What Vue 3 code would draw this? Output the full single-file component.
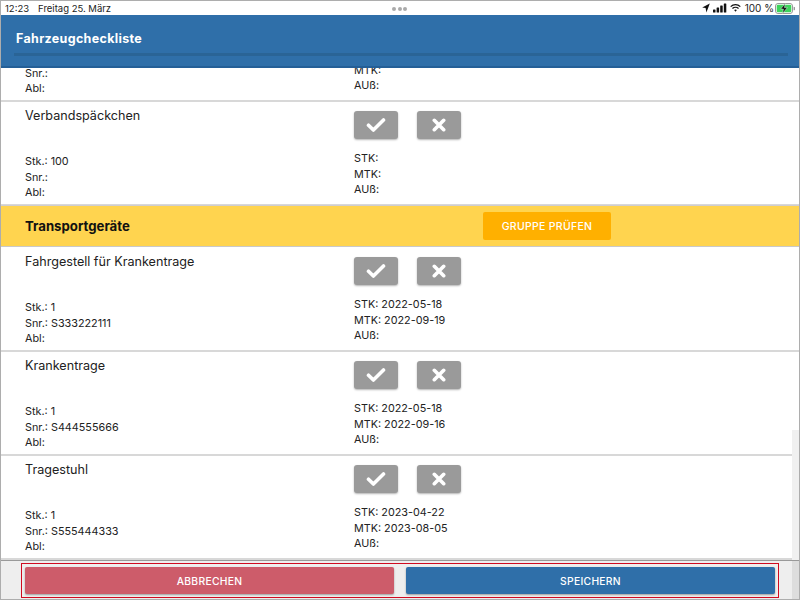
<script setup>
const blocks = [
  { type: 'row', cut: true, title: '', l: ['Stk.:', 'Snr.:', 'Abl:'], r: ['STK:', 'MTK:', 'AUß:'] },
  { type: 'row', title: 'Verbandspäckchen', l: ['Stk.: 100', 'Snr.:', 'Abl:'], r: ['STK:', 'MTK:', 'AUß:'] },
  { type: 'group', title: 'Transportgeräte' },
  { type: 'row', title: 'Fahrgestell für Krankentrage', l: ['Stk.: 1', 'Snr.: S333222111', 'Abl:'], r: ['STK: 2022-05-18', 'MTK: 2022-09-19', 'AUß:'] },
  { type: 'row', title: 'Krankentrage', l: ['Stk.: 1', 'Snr.: S444555666', 'Abl:'], r: ['STK: 2022-05-18', 'MTK: 2022-09-16', 'AUß:'] },
  { type: 'row', title: 'Tragestuhl', l: ['Stk.: 1', 'Snr.: S555444333', 'Abl:'], r: ['STK: 2023-04-22', 'MTK: 2023-08-05', 'AUß:'] },
]
</script>

<template>
  <div class="frame">
    <div class="status">
      <span class="time">12:23</span>
      <span class="date">Freitag 25. März</span>
      <span class="dots"><i></i><i></i><i></i></span>
      <span class="sys">
        <svg width="8" height="10" viewBox="0 0 8 10"><path d="M7.8 0.6 L0.2 4.4 L3.6 5 L4.4 9.4 Z" fill="#111" /></svg>
        <svg width="14" height="10" viewBox="0 0 14 10"><g fill="#111"><rect x="0" y="6.5" width="2.5" height="3" rx=".5" /><rect x="3.6" y="4.5" width="2.5" height="5" rx=".5" /><rect x="7.2" y="2.5" width="2.5" height="7" rx=".5" /><rect x="10.8" y="0.5" width="2.5" height="9" rx=".5" /></g></svg>
        <svg width="11" height="10" viewBox="0 0 13 10"><g fill="none" stroke="#111" stroke-width="1.5"><path d="M.8 3.4a8.2 8.2 0 0 1 11.4 0" /><path d="M2.9 5.6a5.2 5.2 0 0 1 7.2 0" /></g><path d="M4.9 7.4a2.3 2.3 0 0 1 3.2 0L6.5 9.4Z" fill="#111" /></svg>
        <span class="pct">100 %</span>
        <svg width="20" height="11" viewBox="0 0 20 11"><rect x=".5" y=".5" width="17" height="10" rx="2.5" fill="none" stroke="#999" /><rect x="1.7" y="1.7" width="14.6" height="7.6" rx="1.4" fill="#3dd45c" /><path d="M18.6 3.8a1.6 1.6 0 0 1 0 3.4Z" fill="#999" /><path d="M10.2 .6 L5.6 6.1 H8.4 L7.6 10.4 L12.4 4.6 H9.5 Z" fill="#111" stroke="#dff5e3" stroke-width=".5" /></svg>
      </span>
    </div>

    <header class="head">
      <div class="head-title">Fahrzeugcheckliste</div>
      <div class="head-line"></div>
    </header>

    <main class="list">
      <template v-for="(b, i) in blocks" :key="i">
        <section v-if="b.type === 'group'" class="group">
          <strong class="group-title">{{ b.title }}</strong>
          <button class="group-btn">GRUPPE PRÜFEN</button>
        </section>
        <section v-else class="row" :class="{ cut: b.cut }">
          <div class="col left">
            <div class="title">{{ b.title }}</div>
            <div class="lines">
              <div v-for="t in b.l" :key="t">{{ t }}</div>
            </div>
          </div>
          <div class="col right">
            <div class="actions">
              <button class="act">
                <svg width="20" height="16" viewBox="0 0 20 16"><path d="M2.5 8.2 L7.4 13 L17.5 3" fill="none" stroke="#fff" stroke-width="3.6" stroke-linecap="round" stroke-linejoin="round" /></svg>
              </button>
              <button class="act">
                <svg width="14" height="14" viewBox="0 0 14 14"><path d="M2.3 2.3 L11.7 11.7 M11.7 2.3 L2.3 11.7" fill="none" stroke="#fff" stroke-width="3.6" stroke-linecap="round" /></svg>
              </button>
            </div>
            <div class="lines">
              <div v-for="t in b.r" :key="t">{{ t }}</div>
            </div>
          </div>
        </section>
      </template>
      <div class="track"></div>
    </main>

    <footer class="foot">
      <div class="foot-box">
        <button class="foot-btn cancel">ABBRECHEN</button>
        <button class="foot-btn save">SPEICHERN</button>
      </div>
      <div class="foot-track"></div>
    </footer>
  </div>
</template>

<style>
html, body { margin: 0; padding: 0; }
</style>

<style scoped>
.frame {
  box-sizing: border-box;
  width: 800px;
  height: 600px;
  border: 1px solid #adadad;
  display: flex;
  flex-direction: column;
  overflow: hidden;
  background: #fff;
  font-family: Inter, "Liberation Sans", sans-serif;
  color: #222;
}
.status {
  height: 14px;
  flex: none;
  display: flex;
  align-items: center;
  padding: 0 4px 0 4px;
  font-size: 9.5px;
  color: #222;
  position: relative;
}
.time { margin-right: 9px; }
.dots {
  position: absolute;
  left: 391px;
  top: 6px;
  display: flex;
  gap: 1.5px;
}
.dots i {
  width: 4px;
  height: 4px;
  border-radius: 50%;
  background: #aaa;
}
.sys {
  margin-left: auto;
  display: flex;
  align-items: center;
  gap: 3px;
}
.pct { margin: 0 -2px 0 1px; font-size: 10px; }
.head {
  height: 53px;
  flex: none;
  box-sizing: border-box;
  background: #2f6fa9;
  border-bottom: 2px solid #245f97;
  padding: 16px 11px 0 13px;
  color: #fff;
}
.head-title {
  font-size: 12.5px;
  font-weight: 700;
  letter-spacing: .33px;
  padding-left: 2px;
  line-height: 16px;
}
.head-line {
  margin-top: 6px;
  height: 3px;
  background: #2a6496;
}
.list {
  flex: 1;
  min-height: 0;
  overflow: hidden;
  position: relative;
}
.row {
  box-sizing: border-box;
  height: 104px;
  display: flex;
  padding: 5px 0 0 24px;
  border-bottom: 2px solid #d8d8d8;
  font-size: 10.8px;
  line-height: 15.5px;
}
.row.cut { margin-top: -70px; }
.col { display: flex; flex-direction: column; }
.left { width: 329px; }
.title {
  font-size: 12.6px;
  line-height: 18px;
  height: 42px;
}
.left .lines { margin-top: 5px; }
.actions {
  height: 35px;
  padding-top: 4px;
  display: flex;
  gap: 19px;
}
.right .lines { margin-top: 5px; }
.act {
  width: 44px;
  height: 28px;
  padding: 0;
  border: 0;
  border-radius: 3px;
  background: #9a9a9a;
  box-shadow: 0 1px 2px rgba(0, 0, 0, .3);
  display: flex;
  align-items: center;
  justify-content: center;
}
.group {
  box-sizing: border-box;
  height: 42px;
  display: flex;
  align-items: center;
  padding-left: 24px;
  margin: -1px 0 1px;
  background: #ffd44f;
  border-top: 1px solid #cfcdd0;
  border-bottom: 1px solid #c9c9c9;
}
.group-title {
  font-size: 13.2px;
  font-weight: 700;
  color: #111;
  width: 458px;
}
.group-btn {
  width: 128px;
  height: 28px;
  border: 0;
  border-radius: 2px;
  background: #ffb000;
  color: #fff;
  font: 500 10.5px Inter, "Liberation Sans", sans-serif;
  letter-spacing: .3px;
  padding: 0;
}
.track {
  position: absolute;
  right: 0;
  top: 362px;
  bottom: 0;
  width: 7px;
  background: #f0f0f0;
}
.foot {
  height: 39px;
  flex: none;
  box-sizing: border-box;
  background: #eeeeee;
  border-top: 1px solid #999;
  padding: 2px 0 0 20px;
  display: flex;
  position: relative;
}
.foot-box {
  box-sizing: border-box;
  width: 758px;
  height: 35px;
  border: 1px solid #d00a20;
  padding: 3px;
  display: flex;
  gap: 12px;
}
.foot-btn {
  flex: 1;
  border: 0;
  border-radius: 2px;
  color: #fff;
  font: 500 10.3px Inter, "Liberation Sans", sans-serif;
  letter-spacing: .3px;
  padding: 0;
  box-shadow: 0 1px 2px rgba(0, 0, 0, .35);
}
.cancel { background: #cd5c6a; }
.save { background: #2f6fa9; }
.foot-track {
  position: absolute;
  right: 0;
  top: 0;
  bottom: 0;
  width: 7px;
  background: #dddddd;
}
</style>
